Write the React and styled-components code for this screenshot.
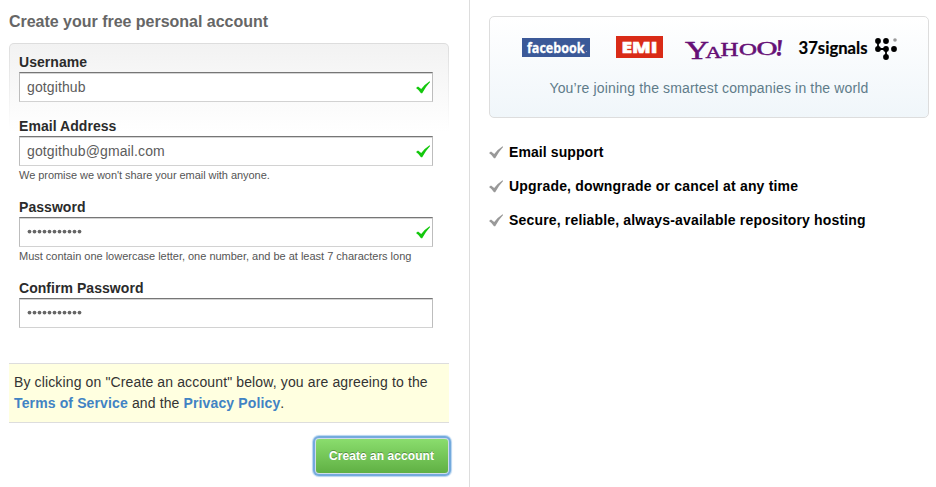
import React from "react";
import styled, { createGlobalStyle } from "styled-components";

const GlobalStyle = createGlobalStyle`
  * { box-sizing: border-box; }
  body {
    margin: 0;
    background: #fff;
    font-family: "Liberation Sans", Arial, sans-serif;
    overflow: hidden;
  }
`;

const Page = styled.main`
  display: grid;
  grid-template-columns: 470px 1fr;
  width: 936px;
  height: 487px;
`;

const SignupColumn = styled.section`
  display: flex;
  flex-direction: column;
  padding: 12px 20px 0 9px;
  border-right: 1px solid #ddd;
`;

const Title = styled.h1`
  margin: 0 0 12px;
  font-size: 16px;
  line-height: 19px;
  letter-spacing: -0.02px;
  color: #666;
  white-space: nowrap;
`;

const FormFrame = styled.div`
  height: 320px;
  padding: 1px 1px 0;
  border-radius: 5px 5px 0 0;
  background: linear-gradient(#ddd, #fff 88px);
`;

const FormBody = styled.form`
  height: 100%;
  padding: 9px 15px 0 9px;
  border-radius: 4px 4px 0 0;
  background: linear-gradient(#f2f2f2, #fff 88px);
`;

const Field = styled.div`
  display: flex;
  flex-direction: column;
  height: ${(p) => p.$height}px;
`;

const Label = styled.label`
  height: 19px;
  font-size: 14px;
  font-weight: bold;
  line-height: 18px;
  letter-spacing: 0.05px;
  color: #2b2b2b;
`;

const InputBox = styled.div`
  display: flex;
  align-items: center;
  justify-content: space-between;
  width: 414px;
  height: 30px;
  padding: 0 1px 0 7px;
  border: 1px solid;
  border-color: #767676 #bdbdbd #d2d2d2 #bdbdbd;
  background: #fff;
  box-shadow: inset 0 1px 0 #d4d4d4;
`;

const Value = styled.span`
  font-size: 14px;
  line-height: 18px;
  letter-spacing: 0.12px;
  color: #5c5c5c;
`;

const Hint = styled.p`
  margin: 3px 0 0;
  font-size: 11px;
  line-height: 13px;
  letter-spacing: ${(p) => p.$track || 0}px;
  color: #555;
  white-space: nowrap;
`;

const Terms = styled.p`
  width: 440px;
  height: 60px;
  margin: 0;
  padding: 8px 5px;
  border: solid #ddd;
  border-width: 1px 0;
  background: #ffffe0;
  font-size: 14px;
  line-height: 21px;
  letter-spacing: 0.13px;
  color: #333;
  white-space: nowrap;
`;

const TermsLine = styled.span`
  display: block;
`;

const TermsLink = styled.a`
  font-weight: bold;
  color: #4183c4;
`;

const SubmitButton = styled.button`
  align-self: flex-end;
  width: 132px;
  height: 34px;
  margin: 16px 1px 0 0;
  padding: 0 1px 0 0;
  border: 0;
  border-radius: 3px;
  background: linear-gradient(#8add6d, #60b044);
  box-shadow: 0 0 0 1px #cfdcea, 0 0 0 3px #74aadd, 0 0 1px 4px #b5d4f0;
  font: bold 12px/35px "Liberation Sans", Arial, sans-serif;
  letter-spacing: 0.06px;
  color: #fff;
  text-shadow: 0 -1px 0 rgba(0, 0, 0, 0.3);
  white-space: nowrap;
`;

const InfoColumn = styled.aside`
  padding: 16px 7px 0 19px;
`;

const CompaniesCard = styled.div`
  height: 102px;
  border: 1px solid #ddd;
  border-radius: 5px;
  background: linear-gradient(#fff, #f0f6fa);
`;

const LogoRow = styled.div`
  display: flex;
  padding: 16px 0 0 31px;
  height: 61px;
`;

const CardCaption = styled.p`
  margin: 0;
  text-align: center;
  font-size: 14px;
  line-height: 20px;
  letter-spacing: 0.15px;
  color: #5f7c8a;
`;

const FeatureList = styled.ul`
  display: flex;
  flex-direction: column;
  gap: 14px;
  margin: 24px 0 0;
  padding: 0;
  list-style: none;
`;

const Feature = styled.li`
  display: flex;
  align-items: center;
  gap: 5px;
  height: 20px;
  font-size: 14px;
  font-weight: bold;
  letter-spacing: ${(p) => p.$track || 0}px;
  color: #000;
  white-space: nowrap;
`;

const CheckSvg = styled.svg`
  flex: none;
  width: 15px;
  height: 13px;
`;

const Check = ({ color }) => (
  <CheckSvg viewBox="0 0 15 13" fill={color}>
    <path d="M0 7 L2 5.4 L5.2 8 Q9 3.2 13.6 0.3 L14.1 1 Q9.6 5.8 6.2 12.2 L5 12.2 Q3 9 0 7 Z" />
  </CheckSvg>
);

const Logos = () => (
  <svg width="380" height="32" viewBox="521 33 380 32">
    <rect x="522" y="38" width="68" height="19" fill="#3b5998" />
    <text x="527" y="52.7" fontFamily="Open Sans" fontWeight="700" fontSize="15" stroke="#fff" strokeWidth="0.3" textLength="57.5" lengthAdjust="spacingAndGlyphs" fill="#fff">facebook</text>
    <circle cx="586.5" cy="51.5" r="0.6" fill="#a5b2d2" />
    <rect x="616" y="36" width="47" height="22" fill="#d92b17" />
    <text x="621.5" y="52.9" fontFamily="Open Sans" fontWeight="800" fontSize="16.5" stroke="#fff" strokeWidth="0.6" textLength="36" lengthAdjust="spacingAndGlyphs" fill="#fff">EMI</text>
    <g fill="#660f76" stroke="#660f76" strokeWidth="0.5" fontFamily="Liberation Serif">
      <text x="685" y="58.5" fontSize="26" textLength="24" lengthAdjust="spacingAndGlyphs">Y</text>
      <text x="705.5" y="57.5" fontSize="17.5" textLength="16" lengthAdjust="spacingAndGlyphs">A</text>
      <text x="720.5" y="55.5" fontSize="18" textLength="18" lengthAdjust="spacingAndGlyphs">H</text>
      <text x="739" y="54.8" fontSize="16.5" textLength="18" lengthAdjust="spacingAndGlyphs">O</text>
      <text x="756.5" y="54.5" fontSize="18.5" textLength="21" lengthAdjust="spacingAndGlyphs">O</text>
      <text x="775.5" y="55.5" fontSize="23" fontWeight="bold" transform="rotate(5 780 50)">!</text>
    </g>
    <text x="798.5" y="54" fontFamily="Lato" fontWeight="700" fontSize="16.5" stroke="#000" strokeWidth="0.2" textLength="69" lengthAdjust="spacingAndGlyphs" fill="#000">37signals</text>
    <path d="M878 41 V49 H886 V57" stroke="#000" strokeWidth="1.8" fill="none" />
    <g fill="#000">
      <circle cx="878" cy="41" r="2.9" />
      <circle cx="886" cy="41" r="2.9" />
      <circle cx="878" cy="49" r="2.9" />
      <circle cx="886" cy="49" r="2.9" />
      <circle cx="894" cy="49" r="2.9" />
      <circle cx="886" cy="57" r="2.9" />
    </g>
    <circle cx="895" cy="40" r="1.8" fill="#999" />
  </svg>
);

const PasswordDots = () => (
  <svg width="56" height="10" viewBox="0 0 56 10" fill="#666">
    {Array.from({ length: 11 }, (_, i) => (
      <circle key={i} cx={2.5 + i * 5} cy="4.6" r="1.9" />
    ))}
  </svg>
);

export default function App() {
  return (
    <>
      <GlobalStyle />
      <Page>
        <SignupColumn>
          <Title>Create your free personal account</Title>
          <FormFrame>
            <FormBody>
              <Field $height={64}>
                <Label>Username</Label>
                <InputBox><Value>gotgithub</Value><Check color="#14c80d" /></InputBox>
              </Field>
              <Field $height={81}>
                <Label>Email Address</Label>
                <InputBox><Value>gotgithub@gmail.com</Value><Check color="#14c80d" /></InputBox>
                <Hint $track={-0.05}>We promise we won't share your email with anyone.</Hint>
              </Field>
              <Field $height={81}>
                <Label>Password</Label>
                <InputBox><PasswordDots /><Check color="#14c80d" /></InputBox>
                <Hint $track={-0.01}>Must contain one lowercase letter, one number, and be at least 7 characters long</Hint>
              </Field>
              <Field $height={60}>
                <Label>Confirm Password</Label>
                <InputBox><PasswordDots /></InputBox>
              </Field>
            </FormBody>
          </FormFrame>
          <Terms>
            <TermsLine>By clicking on "Create an account" below, you are agreeing to the</TermsLine>
            <TermsLine><TermsLink>Terms of Service</TermsLink> and the <TermsLink>Privacy Policy</TermsLink>.</TermsLine>
          </Terms>
          <SubmitButton type="button">Create an account</SubmitButton>
        </SignupColumn>
        <InfoColumn>
          <CompaniesCard>
            <LogoRow><Logos /></LogoRow>
            <CardCaption>You’re joining the smartest companies in the world</CardCaption>
          </CompaniesCard>
          <FeatureList>
            <Feature $track={0.09}><Check color="#999" />Email support</Feature>
            <Feature $track={0.19}><Check color="#999" />Upgrade, downgrade or cancel at any time</Feature>
            <Feature $track={0.17}><Check color="#999" />Secure, reliable, always-available repository hosting</Feature>
          </FeatureList>
        </InfoColumn>
      </Page>
    </>
  );
}
